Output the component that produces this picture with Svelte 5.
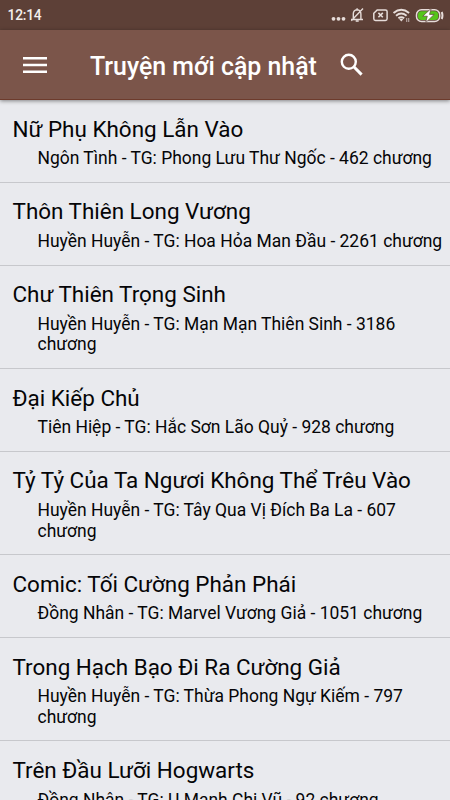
<script lang="ts">
  interface Story {
    title: string;
    genre: string;
    author: string;
    chapters: number;
  }

  const stories: Story[] = [
    { title: "Nữ Phụ Không Lẫn Vào", genre: "Ngôn Tình", author: "Phong Lưu Thư Ngốc", chapters: 462 },
    { title: "Thôn Thiên Long Vương", genre: "Huyền Huyễn", author: "Hoa Hỏa Man Đầu", chapters: 2261 },
    { title: "Chư Thiên Trọng Sinh", genre: "Huyền Huyễn", author: "Mạn Mạn Thiên Sinh", chapters: 3186 },
    { title: "Đại Kiếp Chủ", genre: "Tiên Hiệp", author: "Hắc Sơn Lão Quỷ", chapters: 928 },
    { title: "Tỷ Tỷ Của Ta Ngươi Không Thể Trêu Vào", genre: "Huyền Huyễn", author: "Tây Qua Vị Đích Ba La", chapters: 607 },
    { title: "Comic: Tối Cường Phản Phái", genre: "Đồng Nhân", author: "Marvel Vương Giả", chapters: 1051 },
    { title: "Trong Hạch Bạo Đi Ra Cường Giả", genre: "Huyền Huyễn", author: "Thừa Phong Ngự Kiếm", chapters: 797 },
    { title: "Trên Đầu Lưỡi Hogwarts", genre: "Đồng Nhân", author: "U Mạnh Chi Vũ", chapters: 92 },
  ];
</script>

<div class="screen">
  <div class="status">
    <span class="clock">12:14</span>
    <svg class="indicators" width="114" height="30" viewBox="0 0 114 30" fill="none" aria-hidden="true">
      <g fill="#e6dcd9">
        <circle cx="3.5" cy="18.8" r="1.9" />
        <circle cx="8.5" cy="18.8" r="1.9" />
        <circle cx="13.5" cy="18.8" r="1.9" />
      </g>
      <!-- muted bell -->
      <g stroke="#e6dcd9" stroke-width="1.4">
        <path d="M21 19.5h12M23.3 19v-5q0-3.8 3.8-4.2 3.8.4 3.8 4.2v5M27.1 8.3v1.7M21.3 20.7L33 8.5" />
        <path d="M25.7 21h3" stroke-width="1.6" />
      </g>
      <!-- missing SIM -->
      <path d="M47.2 9.9h8.200q1.700 0 1.700 1.700v7.100q0 1.700-1.700 1.700H45.500q-1.700 0-1.700-1.700V13.300z" stroke="#e6dcd9" stroke-width="1.5" />
      <path d="M48.400 12.900l4.400 4.400m0-4.400l-4.400 4.400" stroke="#e6dcd9" stroke-width="1.6" />
      <g stroke="#e6dcd9" stroke-width="1.9">
        <path d="M63.500 12.900q7.800-6.400 15.600 0M66 15.700q5.300-4.200 10.600 0M68.400 18.300q2.900-2.200 5.800 0" />
      </g>
      <path d="M69.300 19.300q2-1.300 4 0l-2 2.300z" fill="#e6dcd9" />
      <path d="M76.700 18v4m2-4v4" stroke="#b9aaa6" stroke-width="1.1" />
      <!-- charging battery -->
      <rect x="86.5" y="9.7" width="23.2" height="11.8" rx="5" stroke="#e6dcd9" stroke-width="1.5" />
      <rect x="88" y="11.2" width="20.2" height="8.8" rx="3.5" fill="#55c51b" />
      <path d="M111.700 12q1.500 3.500 0 7" stroke="#e6dcd9" stroke-width="2" />
      <path d="M101.300 8.300L92.800 16.200h4.500l-1.700 6.500 8.600-8.300h-4.700z" fill="#fff" stroke="#5d4037" stroke-width=".7" />
    </svg>
  </div>

  <header class="toolbar">
    <button class="icon" aria-label="Menu">
      <svg width="24" height="18" viewBox="0 0 24 18">
        <path d="M0 2.200h24M0 9h24M0 15.700h24" stroke="#fff" stroke-width="2.6" />
      </svg>
    </button>
    <h1>Truyện mới cập nhật</h1>
    <button class="icon search" aria-label="Search">
      <svg width="24" height="24" viewBox="0 0 24 24" fill="none" stroke="#fff" stroke-width="2.4">
        <circle cx="8.8" cy="8.8" r="7" />
        <path d="M13.800 13.800l7.800 7.800" stroke-width="3" />
      </svg>
    </button>
  </header>

  <ul class="list">
    {#each stories as story (story.title)}
      <li>
        <h2>{story.title}</h2>
        <p>{story.genre} - TG: {story.author} - {story.chapters} chương</p>
      </li>
    {/each}
  </ul>
</div>

<style>
  :global(body) {
    background: #e9eaee;
  }

  .screen {
    display: flex;
    flex-direction: column;
    height: 800px;
    overflow: hidden;
    background: #e9eaee;
    font-family: Roboto, sans-serif;
    color: #050507;
  }

  .status {
    flex: none;
    display: flex;
    align-items: center;
    justify-content: space-between;
    height: 30px;
    padding: 0 6px 0 7.5px;
    background: #5d4037;
    color: #f3eeec;
  }

  .clock {
    font-size: 13.8px;
    font-weight: 500;
    letter-spacing: -0.2px;
  }

  .toolbar {
    flex: none;
    z-index: 1;
    display: flex;
    align-items: center;
    box-sizing: border-box;
    height: 70px;
    padding-left: 23px;
    border-bottom: 1px solid #6d3b2c;
    background: #7b554a;
    box-shadow: 0 1px 4px rgba(0, 0, 0, 0.45);
    color: #fff;
  }

  .icon {
    display: flex;
    padding: 0;
    border: none;
    background: none;
  }
  .search {
    margin-left: 23px;
  }

  h1 {
    margin: 4px 0 0 43px;
    font-size: 24.9px;
    font-weight: 500;
    line-height: 32px;
    white-space: nowrap;
  }

  .list {
    margin: 0;
    padding: 0;
    list-style: none;
  }

  li {
    padding: 14.5px 6px 13.3px 12.5px;
    border-bottom: 1px solid #c7c8cc;
  }

  h2 {
    margin: 0;
    font-size: 22.45px;
    font-weight: 400;
    line-height: 29px;
    white-space: nowrap;
  }

  p {
    margin: 4.7px 0 0 25px;
    font-size: 17.48px;
    line-height: 20.4px;
  }
</style>
